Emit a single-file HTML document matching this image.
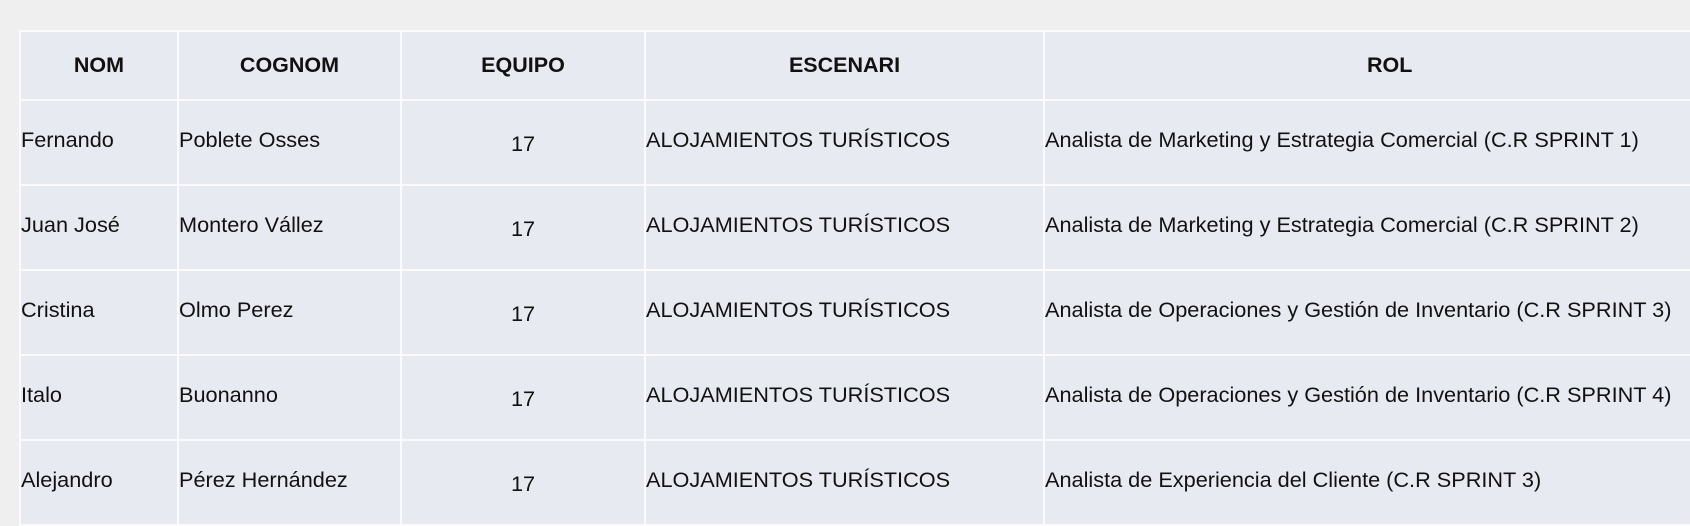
<!DOCTYPE html>
<html><head><meta charset="utf-8"><style>
html,body{margin:0;padding:0;background:#efefef;width:1690px;height:526px;overflow:hidden;font-family:"Liberation Sans",Arial,sans-serif;color:#111;}
table{position:absolute;left:19px;top:30px;border-collapse:collapse;width:1700px;table-layout:fixed;}
td,th{background:#e7eaf1;border:2px solid #fbfbfd;padding:0;font-size:21.7px;}
th{height:67px;font-weight:bold;text-align:center;font-size:21.5px;}
td{height:85px;text-align:left;padding-bottom:6px;box-sizing:border-box;}
td.c{text-align:center;padding-top:2px;padding-bottom:0;}
</style></head><body>
<table>
<colgroup><col style="width:158px"><col style="width:223px"><col style="width:244px"><col style="width:399px"><col style="width:676px"></colgroup>
<tr><th>NOM</th><th>COGNOM</th><th>EQUIPO</th><th>ESCENARI</th><th style="text-align:left;padding-left:322px">ROL</th></tr>
<tr><td>Fernando</td><td>Poblete Osses</td><td class="c">17</td><td>ALOJAMIENTOS TURÍSTICOS</td><td>Analista de Marketing y Estrategia Comercial (C.R SPRINT 1)</td></tr>
<tr><td>Juan José</td><td>Montero Vállez</td><td class="c">17</td><td>ALOJAMIENTOS TURÍSTICOS</td><td>Analista de Marketing y Estrategia Comercial (C.R SPRINT 2)</td></tr>
<tr><td>Cristina</td><td>Olmo Perez</td><td class="c">17</td><td>ALOJAMIENTOS TURÍSTICOS</td><td>Analista de Operaciones y Gestión de Inventario (C.R SPRINT 3)</td></tr>
<tr><td>Italo</td><td>Buonanno</td><td class="c">17</td><td>ALOJAMIENTOS TURÍSTICOS</td><td>Analista de Operaciones y Gestión de Inventario (C.R SPRINT 4)</td></tr>
<tr><td>Alejandro</td><td>Pérez Hernández</td><td class="c">17</td><td>ALOJAMIENTOS TURÍSTICOS</td><td>Analista de Experiencia del Cliente (C.R SPRINT 3)</td></tr>
</table>
</body></html>
